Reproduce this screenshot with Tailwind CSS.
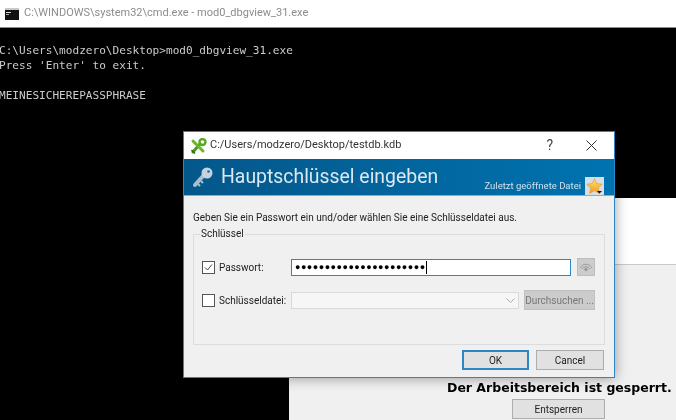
<!DOCTYPE html>
<html lang="en">
<head>
    <meta charset="UTF-8">
    <title>KeePass</title>
    <script src="https://cdn.jsdelivr.net/npm/@tailwindcss/browser@4"></script>
</head>
<body class="bg-black">
    <div class="relative w-[676px] h-[420px] overflow-hidden bg-black font-['Roboto',sans-serif] blur-[0.35px]">
        <!-- Console window -->
        <div class="flex items-center h-[27px] bg-white border-b border-[#8a8a8a] box-content text-[11px] text-[#8c8c8c]">
            <svg class="ml-[5px] mr-[5px] w-[14px] h-[12px]" viewBox="0 0 14 12">
                <rect width="14" height="12" fill="#c8c8c8"/>
                <rect y="2" width="14" height="10" fill="#111"/>
                <rect x="1" y="4" width="5" height="1" fill="#ddd"/>
                <rect x="1" y="6" width="3" height="1" fill="#aaa"/>
            </svg>
            <span>C:\WINDOWS\system32\cmd.exe - mod0_dbgview_31.exe</span>
        </div>
        <div class="pt-[15px] -ml-px font-['DejaVu_Sans_Mono',monospace] text-[11.1px] leading-[15px] text-[#cccccc]">
            <p class="whitespace-nowrap">C:\Users\modzero\Desktop&gt;mod0_dbgview_31.exe</p>
            <p class="whitespace-nowrap">Press 'Enter' to exit.</p>
            <p>&nbsp;</p>
            <p class="whitespace-nowrap">MEINESICHEREPASSPHRASE</p>
        </div>

        <!-- Locked workspace window behind the dialog -->
        <div class="absolute left-[289px] top-[198px] w-[387px] h-[222px] bg-[#f0f0f0] flex flex-col">
            <div class="h-[66px] bg-white border-b border-[#c8c8c8] box-content"></div>
            <div class="flex-1 relative">
                <p class="absolute left-[158px] top-[114px] whitespace-nowrap font-['DejaVu_Sans',sans-serif] font-bold text-[12.5px] leading-[18px] text-black">Der Arbeitsbereich ist gesperrt.</p>
                <button class="absolute left-[223px] top-[134px] w-[93px] h-[20px] bg-[#e1e1e1] border border-[#adadad] text-[10px] text-[#222]">Entsperren</button>
            </div>
        </div>

        <!-- Master key dialog -->
        <div class="absolute left-[183px] top-[131px] w-[432px] h-[247px] flex flex-col bg-[#f0f0f0] border border-[#2f86c4] shadow-[0_0_12px_rgba(0,0,0,0.4)] text-[10px] text-[#222]">
            <div class="flex items-center h-[27px] shrink-0 bg-white text-[11px] text-[#333]">
                <svg class="ml-[6px] mr-[3px] w-[17px] h-[16px]" viewBox="0 0 17 16">
                    <path d="M3 14 L10 6" stroke="#4f9a1e" stroke-width="3" stroke-linecap="round"/>
                    <path d="M3 3 L13 13" stroke="#6cb52c" stroke-width="3" stroke-linecap="round"/>
                    <circle cx="12.5" cy="4" r="3" fill="none" stroke="#5aa822" stroke-width="2.4"/>
                    <path d="M1.5 12 L5 15.5" stroke="#2f6b12" stroke-width="1.5"/>
                </svg>
                <span>C:/Users/modzero/Desktop/testdb.kdb</span>
                <span class="ml-auto mr-[33px] text-[14px] text-[#444]">?</span>
                <svg class="mr-[17px] w-[11px] h-[11px]" viewBox="0 0 11 11" fill="none" stroke="#333" stroke-width="1">
                    <path d="M0.5 0.5 L10.5 10.5 M10.5 0.5 L0.5 10.5"/>
                </svg>
            </div>
            <div class="relative flex items-center h-[37px] shrink-0 bg-gradient-to-r from-[#04578a] to-[#0073b0] border-b border-[#7fb0d0]">
                <svg class="ml-[8px] mr-[7px] w-[22px] h-[22px]" viewBox="0 0 22 22">
                    <path d="M3 19 L12 9" stroke="#a9bfce" stroke-width="4" stroke-linecap="round"/>
                    <path d="M6 18 L8 20 M9 15 L11 17" stroke="#a9bfce" stroke-width="2"/>
                    <circle cx="15" cy="7" r="5.5" fill="#c4d3de"/>
                    <circle cx="16.5" cy="5.5" r="1.3" fill="#1d6a9a"/>
                </svg>
                <span class="text-[19.4px] text-[#dce8f0]">Hauptschlüssel eingeben</span>
                <span class="absolute right-[33px] bottom-[2px] text-[9.5px] text-[#cfe0ec]">Zuletzt geöffnete Datei</span>
                <div class="absolute right-[10px] bottom-0 w-[19px] h-[18px] bg-[#d6dfe5] flex items-center justify-center">
                    <svg class="w-[17px] h-[16px]" viewBox="0 0 17 16">
                        <defs>
                            <linearGradient id="star" x1="0" y1="0" x2="0" y2="1">
                                <stop offset="0" stop-color="#fde27a"/>
                                <stop offset="1" stop-color="#f39a1c"/>
                            </linearGradient>
                        </defs>
                        <path d="M8.5 0.5 L10.8 5.6 L16.3 6.2 L12.2 9.9 L13.4 15.4 L8.5 12.6 L3.6 15.4 L4.8 9.9 L0.7 6.2 L6.2 5.6 Z" fill="url(#star)" stroke="#e08a10" stroke-width="0.5"/>
                        <path d="M11 13 L16 13 L13.5 15.5 Z" fill="#111"/>
                    </svg>
                </div>
            </div>

            <div class="flex-1 flex flex-col px-[9px]">
                <p class="mt-[14px] leading-[15px]">Geben Sie ein Passwort ein und/oder wählen Sie eine Schlüsseldatei aus.</p>
                <fieldset class="mt-[2px] h-[118px] border border-[#dcdcdc] pl-[8px] pr-[9px]">
                    <legend class="-ml-[2px] px-[1px] leading-[14px]">Schlüssel</legend>
                    <div class="flex items-center h-[20px] mt-[16px]">
                        <span class="flex items-center justify-center w-[13px] h-[13px] bg-white border border-[#555]">
                            <svg class="w-[9px] h-[9px]" viewBox="0 0 9 9" fill="none" stroke="#444"><path d="M1 4.5 L3.5 7 L8 1.5"/></svg>
                        </span>
                        <span class="ml-[4px] w-[72px] whitespace-nowrap">Passwort:</span>
                        <div class="flex items-center w-[280px] h-[17px] bg-white border border-[#2f86c4] pl-[3px] text-black">
                            <span class="text-[9px] leading-none tracking-[0.5px] whitespace-nowrap">●●●●●●●●●●●●●●●●●●●●●●</span>
                            <span class="w-px h-[13px] bg-black"></span>
                        </div>
                        <span class="ml-[6px] flex items-center justify-center w-[18px] h-[18px] bg-[#cccccc] border border-[#bdbdbd]">
                            <svg class="w-[14px] h-[11px]" viewBox="0 0 14 11" fill="none" stroke="#9a9a9a" stroke-width="1">
                                <path d="M1 6 C4 1 10 1 13 6 M3 7 C5 4 9 4 11 7"/>
                                <circle cx="7" cy="7.5" r="1.3" fill="#9a9a9a"/>
                            </svg>
                        </span>
                    </div>
                    <div class="flex items-center h-[20px] mt-[13px]">
                        <span class="w-[13px] h-[13px] bg-white border border-[#555]"></span>
                        <span class="ml-[4px] w-[72px] whitespace-nowrap">Schlüsseldatei:</span>
                        <div class="flex items-center justify-end w-[228px] h-[17px] bg-[#f6f6f6] border border-[#dadada]">
                            <svg class="mr-[3px] w-[9px] h-[5px]" viewBox="0 0 9 5" fill="none" stroke="#aaa"><path d="M0.5 0.5 L4.5 4.5 L8.5 0.5"/></svg>
                        </div>
                        <span class="ml-[5px] flex items-center justify-center w-[71px] h-[20px] bg-[#cccccc] border border-[#bfbfbf] text-[#777] whitespace-nowrap">Durchsuchen ...</span>
                    </div>
                </fieldset>
                <div class="flex justify-end gap-[7px] mt-[5px] mr-px">
                    <button class="w-[67px] h-[20px] bg-[#e1e1e1] border-2 border-[#2f86c4] text-[#222]">OK</button>
                    <button class="w-[68px] h-[20px] bg-[#e1e1e1] border border-[#adadad] text-[#222]">Cancel</button>
                </div>
            </div>
        </div>
    </div>
</body>
</html>
